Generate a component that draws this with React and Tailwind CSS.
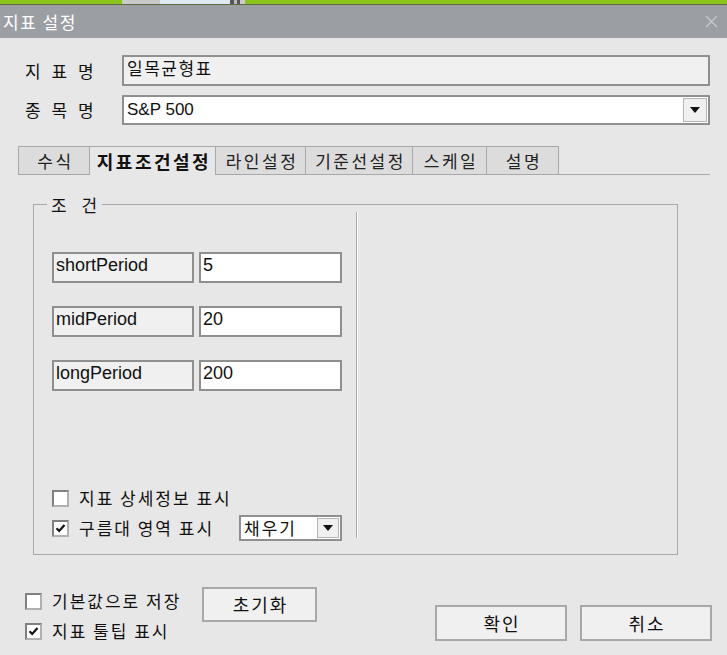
import React from 'react';

const FONT = { fontFamily: '"Liberation Sans", "Noto Sans CJK KR", sans-serif' };
const KO = { fontFamily: '"Noto Sans CJK KR", sans-serif' };

// small sunken checkbox, classic windows look
function CheckBox({ checked }) {
  return (
    <div className="w-[17px] h-[17px] bg-white border-2 border-[#b0b0b0] border-t-[#808080] border-l-[#808080] flex items-center justify-center shrink-0">
      {checked && (
        <svg width="11" height="11" viewBox="0 0 11 11">
          <path d="M1.5 5.2 L4.2 8 L9.5 2" fill="none" stroke="#111" strokeWidth="2.2" />
        </svg>
      )}
    </div>
  );
}

function DropButton({ className }) {
  return (
    <div className={`bg-[#f0f0f0] border border-[#b5b5b5] flex items-center justify-center ${className}`}>
      <svg width="10" height="6" viewBox="0 0 10 6">
        <path d="M0 0 H10 L5 6 Z" fill="#111" />
      </svg>
    </div>
  );
}

function ParamRow({ name, value }) {
  return (
    <div className="flex gap-[5px] h-[31px]">
      <div className="w-[142px] border-2 border-[#8f8f8f] bg-[#f0f0f0] pl-[2px] text-[18px] leading-[22px] text-[#111]">
        {name}
      </div>
      <div className="w-[143px] border-2 border-[#8f8f8f] bg-white pl-[2px] text-[18px] leading-[22px] text-[#111]">
        {value}
      </div>
    </div>
  );
}

const tabs = ['수식', '지표조건설정', '라인설정', '기준선설정', '스케일', '설명'];
const tabWidths = ['w-[72px]', 'w-[126px]', 'w-[90px]', 'w-[107px]', 'w-[74px]', 'w-[72px]'];

export default function App() {
  return (
    <div className="w-[727px] h-[655px] bg-[#e7e7e7] flex flex-col overflow-hidden text-[#111]" style={FONT}>
      {/* strip of the window behind */}
      <div className="h-[4px] flex bg-[#8cc41c]">
        <div className="w-[122px]" />
        <div className="w-[38px] bg-[#c9c9c9]" />
        <div className="w-[70px] bg-[#dfe9f4]" />
        <div className="w-[4px] bg-[#555]" />
        <div className="w-[3px] bg-[#bbb]" />
        <div className="w-[3px] bg-[#555]" />
        <div className="w-[5px] bg-[#ccc]" />
      </div>
      <div className="h-[1px] bg-[#5b6b40]" />

      {/* title bar */}
      <div className="h-[33px] bg-[#9b9ea3] flex items-center justify-between pl-[3px] pr-[9px]">
        <span className="text-white text-[17px] tracking-[1.5px]" style={KO}>지표 설정</span>
        <svg width="13" height="13" viewBox="0 0 13 13">
          <path d="M1 1 L12 12 M12 1 L1 12" stroke="#c8cacd" strokeWidth="1.2" />
        </svg>
      </div>

      <div className="flex-1 flex flex-col">
        {/* name rows */}
        <div className="mt-[17px] flex items-center">
          <div className="w-[122px] pl-[25px] text-[17px] tracking-[1px] [word-spacing:5px]" style={KO}>지 표 명</div>
          <div className="w-[588px] h-[31px] border-2 border-[#8f8f8f] bg-[#f0f0f0] pl-[3px] text-[17px] tracking-[1.5px] leading-[22px]" style={KO}>
            일목균형표
          </div>
        </div>
        <div className="mt-[9px] flex items-center">
          <div className="w-[122px] pl-[25px] text-[17px] tracking-[1px] [word-spacing:5px]" style={KO}>종 목 명</div>
          <div className="w-[588px] h-[30px] border-2 border-[#8f8f8f] bg-white flex items-center">
            <div className="flex-1 pl-[3px] text-[17px]">S&amp;P 500</div>
            <DropButton className="w-[24px] h-[24px] mr-[1px]" />
          </div>
        </div>

        {/* tabs */}
        <div className="mt-[21px] ml-[18px] w-[692px] flex h-[29px]" style={KO}>
          {tabs.map((t, i) => (
            <div
              key={t}
              className={
                i === 1
                  ? `${tabWidths[i]} border-t border-r border-[#a8a8a8] flex items-center justify-center pl-[3px] text-[18px] font-bold tracking-[2.5px]`
                  : `${tabWidths[i]} border-t border-b border-r border-[#a8a8a8] ${i === 0 ? 'border-l' : ''} bg-[#dcdcdc] flex items-center justify-center pl-[3px] text-[17px] tracking-[2.5px] text-[#222]`
              }
            >
              {t}
            </div>
          ))}
          <div className="flex-1 border-b border-[#a8a8a8]" />
        </div>

        {/* condition group */}
        <div className="mt-[29px] ml-[33px] w-[645px] h-[351px] relative border border-[#a8a8a8] flex">
          <div className="absolute -top-[13px] left-[13px] px-[4px] bg-[#e7e7e7] text-[17px] tracking-[1px] [word-spacing:9px]" style={KO}>
            조 건
          </div>
          <div className="w-[322px] flex flex-col pl-[18px] pt-[47px]">
            <div className="flex flex-col gap-[23px]">
              <ParamRow name="shortPeriod" value="5" />
              <ParamRow name="midPeriod" value="20" />
              <ParamRow name="longPeriod" value="200" />
            </div>
            <div className="mt-[96px] flex items-center gap-[10px] h-[22px]">
              <CheckBox />
              <span className="text-[17px] tracking-[2px]" style={KO}>지표 상세정보 표시</span>
            </div>
            <div className="mt-[6px] flex items-center">
              <CheckBox checked />
              <span className="ml-[10px] text-[17px] tracking-[2px]" style={KO}>구름대 영역 표시</span>
              <div className="ml-auto w-[103px] h-[26px] border-2 border-[#8f8f8f] bg-white flex items-center">
                <span className="flex-1 pl-[3px] text-[17px] tracking-[2px]" style={KO}>채우기</span>
                <DropButton className="w-[22px] h-[20px] mr-[1px]" />
              </div>
              <div className="w-[14px]" />
            </div>
          </div>
          <div className="mt-[7px] mb-[16px] w-[2px] border-l border-[#a8a8a8] bg-white" />
        </div>

        {/* bottom */}
        <div className="mt-[32px] flex" style={KO}>
          <div className="ml-[25px] w-[177px] flex flex-col gap-[8px] pt-[3px]">
            <div className="flex items-center gap-[10px] h-[22px]">
              <CheckBox />
              <span className="text-[17px] tracking-[2px]">기본값으로 저장</span>
            </div>
            <div className="flex items-center gap-[10px] h-[22px]">
              <CheckBox checked />
              <span className="text-[17px] tracking-[2px]">지표 툴팁 표시</span>
            </div>
          </div>
          <div className="w-[115px] h-[35px] border-2 border-[#a8a8a8] bg-[#f0f0f0] flex items-center justify-center pl-[2px] text-[18px] tracking-[2px]">
            초기화
          </div>
          <div className="ml-[118px] mt-[18px] w-[132px] h-[36px] border-2 border-[#a8a8a8] bg-[#f0f0f0] flex items-center justify-center pl-[2px] text-[18px] tracking-[2px]">
            확인
          </div>
          <div className="ml-[13px] mt-[18px] w-[132px] h-[36px] border-2 border-[#a8a8a8] bg-[#f0f0f0] flex items-center justify-center pl-[2px] text-[18px] tracking-[2px]">
            취소
          </div>
        </div>
      </div>
    </div>
  );
}
